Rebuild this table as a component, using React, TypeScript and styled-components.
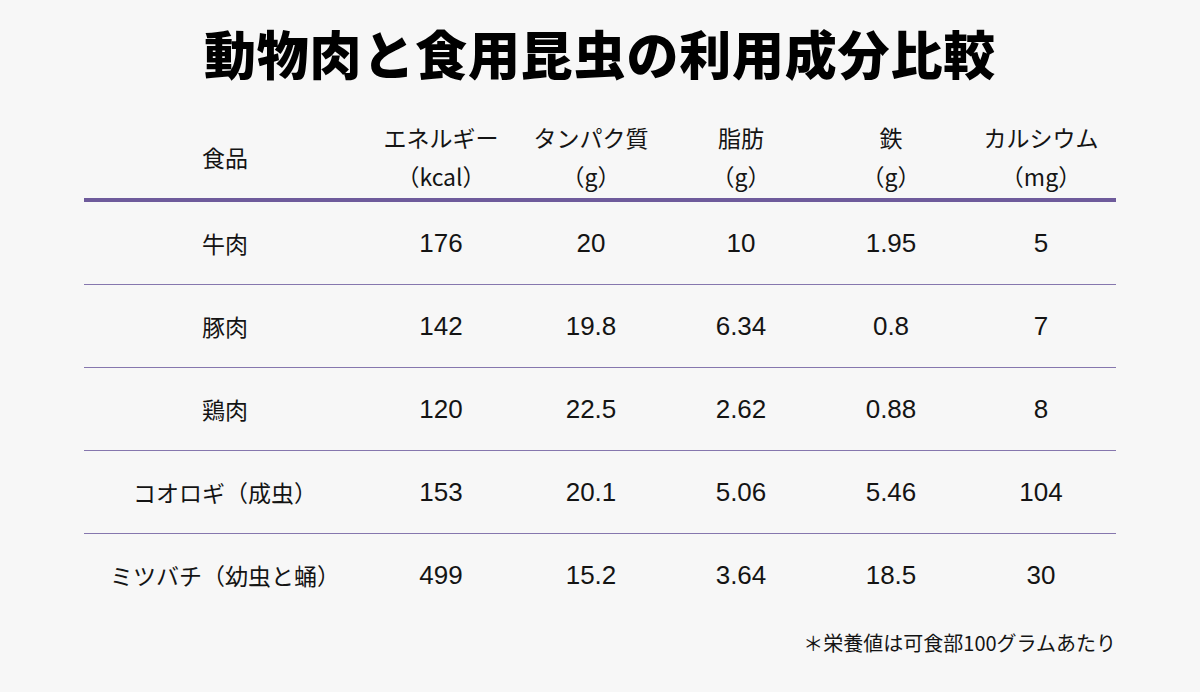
import styled, { createGlobalStyle } from "styled-components";

const GlobalStyle = createGlobalStyle`
  html, body {
    margin: 0;
    padding: 0;
    background: #f7f7f7;
  }
  body {
    font-family: "Noto Sans CJK JP", "Noto Sans", sans-serif;
    color: #141414;
  }
`;

const Page = styled.div`
  width: 1200px;
  height: 692px;
  box-sizing: border-box;
  padding: 22px 84px 0;
  display: flex;
  flex-direction: column;
`;

const Title = styled.h1`
  margin: 0;
  font-size: 52px;
  line-height: 62px;
  font-weight: 900;
  text-align: center;
  color: #000;
  letter-spacing: 0.8px;
`;

const Table = styled.div`
  margin-top: 34px;
  width: 1032px;
  display: flex;
  flex-direction: column;
`;

const Line = styled.div`
  display: grid;
  grid-template-columns: 282px repeat(5, 150px);
  align-items: center;
  justify-items: center;
  box-sizing: border-box;
`;

const HeadRow = styled(Line)`
  padding-bottom: 2px;
  border-bottom: 4px solid #6e5b9b;
`;

const HeadCell = styled.div`
  font-size: 23px;
  line-height: 39px;
  text-align: center;
  white-space: nowrap;
`;

const Row = styled(Line)<{ $last?: boolean }>`
  height: ${(p) => (p.$last ? "82px" : "83px")};
  border-bottom: ${(p) => (p.$last ? "none" : "1px solid #8677ae")};
`;

const NameCell = styled.div`
  font-size: 23px;
  white-space: nowrap;
`;

const ValueCell = styled.div`
  font-family: "Liberation Sans", "Noto Sans CJK JP", sans-serif;
  font-size: 26px;
  white-space: nowrap;
`;

const Note = styled.p`
  margin: 13px 0 0;
  width: 1032px;
  text-align: right;
  font-size: 20px;
  line-height: 28px;
`;

const headers: [string, string][] = [
  ["エネルギー", "（kcal）"],
  ["タンパク質", "（g）"],
  ["脂肪", "（g）"],
  ["鉄", "（g）"],
  ["カルシウム", "（mg）"],
];

const rows: [string, string[]][] = [
  ["牛肉", ["176", "20", "10", "1.95", "5"]],
  ["豚肉", ["142", "19.8", "6.34", "0.8", "7"]],
  ["鶏肉", ["120", "22.5", "2.62", "0.88", "8"]],
  ["コオロギ（成虫）", ["153", "20.1", "5.06", "5.46", "104"]],
  ["ミツバチ（幼虫と蛹）", ["499", "15.2", "3.64", "18.5", "30"]],
];

export default function App() {
  return (
    <>
      <GlobalStyle />
      <Page>
        <Title>動物肉と食用昆虫の利用成分比較</Title>
        <Table>
          <HeadRow>
            <HeadCell>食品</HeadCell>
            {headers.map(([name, unit]) => (
              <HeadCell key={name}>
                {name}
                <br />
                {unit}
              </HeadCell>
            ))}
          </HeadRow>
          {rows.map(([name, values], i) => (
            <Row key={name} $last={i === rows.length - 1}>
              <NameCell>{name}</NameCell>
              {values.map((v, j) => (
                <ValueCell key={j}>{v}</ValueCell>
              ))}
            </Row>
          ))}
        </Table>
        <Note>＊栄養値は可食部100グラムあたり</Note>
      </Page>
    </>
  );
}
